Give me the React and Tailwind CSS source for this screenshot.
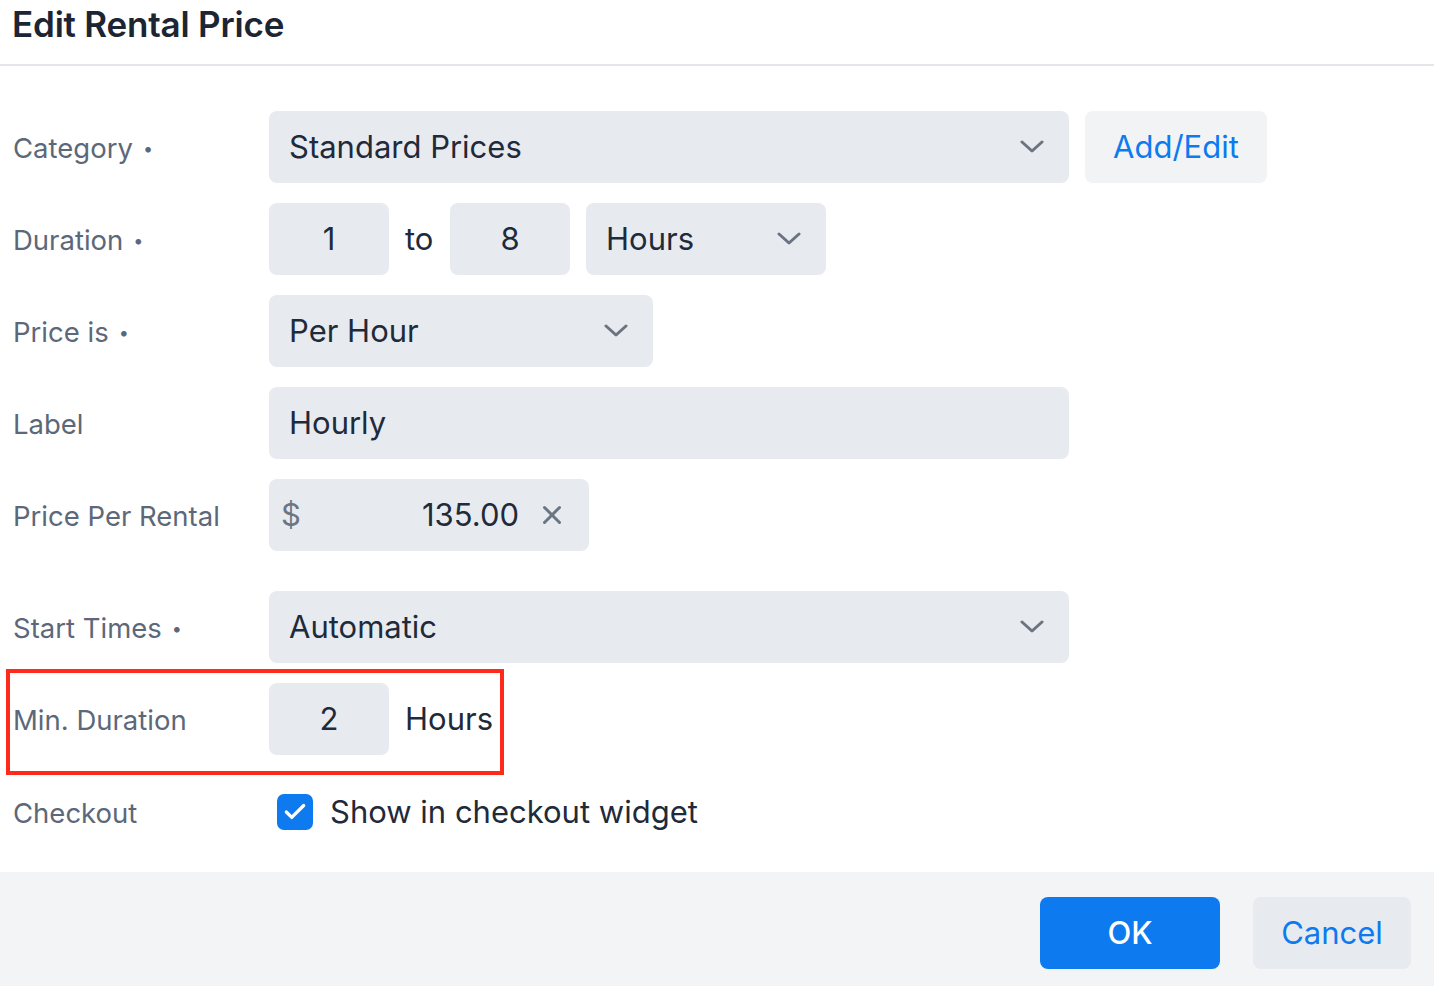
import { Check, X } from 'lucide-react';

const font = { fontFamily: 'Inter, "Noto Sans", sans-serif' };

function Chevron() {
  return (
    <svg width="24" height="14" viewBox="0 0 24 14" fill="none" className="shrink-0">
      <polyline points="2,2 12,11 22,2" stroke="#6b7280" strokeWidth="3" strokeLinecap="round" strokeLinejoin="round" />
    </svg>
  );
}

function Select({ value, className }) {
  return (
    <div className={`h-[72px] bg-[#e7eaef] rounded-[8px] flex items-center justify-between pl-[20px] pr-[25px] text-[31px] text-[#1f2a3a] ${className}`}>
      <span>{value}</span>
      <Chevron />
    </div>
  );
}

function Label({ text, dot }) {
  return (
    <div className="w-[256px] shrink-0 text-[27.5px] text-[#5c6879] flex items-center pt-[3px]">
      {text}
      {dot && <span className="ml-[10px] text-[18px] text-[#5c6879]">•</span>}
    </div>
  );
}

function NumBox({ value }) {
  return (
    <div className="w-[120px] h-[72px] bg-[#e7eaef] rounded-[8px] flex items-center justify-center text-[31px] text-[#1f2a3a]">
      {value}
    </div>
  );
}

export default function App() {
  return (
    <div className="w-[1434px] h-[986px] bg-white flex flex-col overflow-hidden" style={font}>
      {/* Header */}
      <header className="h-[66px] border-b-2 border-[#e3e6ea] pl-[12px] flex items-start">
        <h1 className="text-[35px] leading-[48px] font-semibold text-[#1b2533] tracking-[-0.2px]">Edit Rental Price</h1>
      </header>

      {/* Body */}
      <div className="flex-1 flex flex-col pl-[13px] pt-[45px]">
        <div className="flex items-center h-[72px]">
          <Label text="Category" dot />
          <Select value="Standard Prices" className="w-[800px]" />
          <button className="ml-[16px] w-[182px] h-[72px] bg-[#f2f3f5] rounded-[8px] text-[31px] text-[#0d7af0]">Add/Edit</button>
        </div>

        <div className="flex items-center h-[72px] mt-[20px]">
          <Label text="Duration" dot />
          <NumBox value="1" />
          <span className="w-[61px] pl-[16px] text-[31px] text-[#1f2a3a]">to</span>
          <NumBox value="8" />
          <Select value="Hours" className="w-[240px] ml-[16px]" />
        </div>

        <div className="flex items-center h-[72px] mt-[20px]">
          <Label text="Price is" dot />
          <Select value="Per Hour" className="w-[384px]" />
        </div>

        <div className="flex items-center h-[72px] mt-[20px]">
          <Label text="Label" />
          <div className="w-[800px] h-[72px] bg-[#e7eaef] rounded-[8px] flex items-center pl-[20px] text-[31px] text-[#1f2a3a]">Hourly</div>
        </div>

        <div className="flex items-center h-[72px] mt-[20px]">
          <Label text="Price Per Rental" />
          <div className="w-[320px] h-[72px] bg-[#e7eaef] rounded-[8px] flex items-center pl-[12px] pr-[22px] text-[31px]">
            <span className="text-[#6b7685]">$</span>
            <span className="flex-1 text-right text-[#1f2a3a] pr-[18px]">135.00</span>
            <X size={30} strokeWidth={2.4} className="text-[#6b7685]" />
          </div>
        </div>

        <div className="flex items-center h-[72px] mt-[40px]">
          <Label text="Start Times" dot />
          <Select value="Automatic" className="w-[800px]" />
        </div>

        <div className="relative flex items-center h-[72px] mt-[20px]">
          <Label text="Min. Duration" />
          <NumBox value="2" />
          <span className="pl-[16px] text-[31px] text-[#1f2a3a]">Hours</span>
          <div className="absolute left-[-7px] top-[-14px] w-[498px] h-[106px] border-[4px] border-[#ff2a1a] pointer-events-none" />
        </div>

        <div className="flex items-center h-[36px] mt-[39px]">
          <Label text="Checkout" />
          <div className="ml-[8px] w-[36px] h-[36px] rounded-[7px] bg-[#0d7af0] flex items-center justify-center">
            <Check size={26} strokeWidth={3} className="text-white" />
          </div>
          <span className="ml-[17px] text-[31px] text-[#1f2a3a]">Show in checkout widget</span>
        </div>
      </div>

      {/* Footer */}
      <footer className="h-[114px] bg-[#f3f4f6] flex items-start justify-end pt-[25px] pr-[23px] gap-[33px]">
        <button className="w-[180px] h-[72px] rounded-[8px] bg-[#0d7af0] text-white text-[31px] font-medium">OK</button>
        <button className="w-[158px] h-[72px] rounded-[8px] bg-[#e7eaef] text-[#0d7af0] text-[31px]">Cancel</button>
      </footer>
    </div>
  );
}
